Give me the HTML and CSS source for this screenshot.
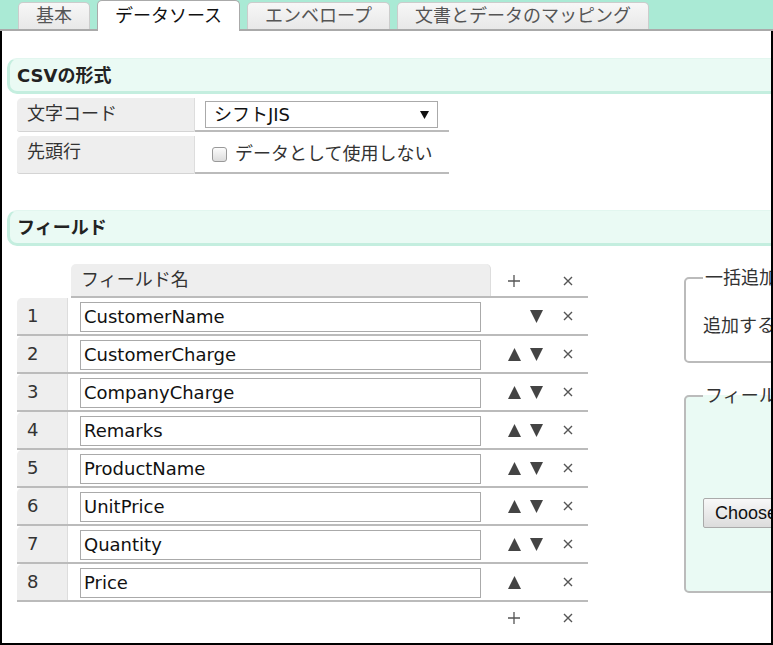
FILE: index.html
```html
<!DOCTYPE html>
<html lang="ja">
<head>
    <meta charset="UTF-8">
    <title>データソース</title>
    <link rel="stylesheet" href="styles.css">
</head>
<body>
    <!-- タブ -->
    <div class="tabs">
        <div class="tab">基本</div>
        <div class="tab tab-active">データソース</div>
        <div class="tab">エンベロープ</div>
        <div class="tab">文書とデータのマッピング</div>
    </div>

    <div class="frame">
        <!-- CSVの形式 -->
        <div class="section-title">CSVの形式</div>
        <div class="form">
            <div class="form-row">
                <div class="form-label">文字コード</div>
                <div class="form-value">
                    <div class="select">
                        <span>シフトJIS</span>
                        <svg width="9" height="8" viewBox="0 0 9 8"><polygon points="0,0 9,0 4.5,8" fill="#111"/></svg>
                    </div>
                </div>
            </div>
            <div class="form-row form-row-2">
                <div class="form-label">先頭行</div>
                <div class="form-value">
                    <span class="checkbox"></span>
                    <span>データとして使用しない</span>
                </div>
            </div>
        </div>

        <!-- フィールド -->
        <div class="section-title section-fields">フィールド</div>
        <div class="fields-wrap">
            <div class="field-table">
                <div class="field-row field-head">
                    <div class="cell-empty"></div>
                    <div class="cell-head">フィールド名</div>
                    <div class="cell-move"><svg class="icon-plus" width="12" height="12" viewBox="0 0 12 12"><path d="M6 0V12M0 6H12" stroke="#555" stroke-width="1.3"/></svg></div>
                    <div class="cell-del"><svg width="10" height="10" viewBox="0 0 10 10"><path d="M1 1L9 9M9 1L1 9" stroke="#555" stroke-width="1.4"/></svg></div>
                </div>

                <div class="field-row">
                    <div class="cell-num">1</div>
                    <div class="cell-name"><div class="input">CustomerName</div></div>
                    <div class="cell-move"><span class="tri"></span><svg class="tri" width="13" height="13" viewBox="0 0 13 13"><polygon points="0,0 13,0 6.5,13" fill="#444"/></svg></div>
                    <div class="cell-del"><svg width="10" height="10" viewBox="0 0 10 10"><path d="M1 1L9 9M9 1L1 9" stroke="#555" stroke-width="1.4"/></svg></div>
                </div>
                <div class="field-row">
                    <div class="cell-num">2</div>
                    <div class="cell-name"><div class="input">CustomerCharge</div></div>
                    <div class="cell-move"><svg class="tri" width="13" height="13" viewBox="0 0 13 13"><polygon points="6.5,0 13,13 0,13" fill="#444"/></svg><svg class="tri" width="13" height="13" viewBox="0 0 13 13"><polygon points="0,0 13,0 6.5,13" fill="#444"/></svg></div>
                    <div class="cell-del"><svg width="10" height="10" viewBox="0 0 10 10"><path d="M1 1L9 9M9 1L1 9" stroke="#555" stroke-width="1.4"/></svg></div>
                </div>
                <div class="field-row">
                    <div class="cell-num">3</div>
                    <div class="cell-name"><div class="input">CompanyCharge</div></div>
                    <div class="cell-move"><svg class="tri" width="13" height="13" viewBox="0 0 13 13"><polygon points="6.5,0 13,13 0,13" fill="#444"/></svg><svg class="tri" width="13" height="13" viewBox="0 0 13 13"><polygon points="0,0 13,0 6.5,13" fill="#444"/></svg></div>
                    <div class="cell-del"><svg width="10" height="10" viewBox="0 0 10 10"><path d="M1 1L9 9M9 1L1 9" stroke="#555" stroke-width="1.4"/></svg></div>
                </div>
                <div class="field-row">
                    <div class="cell-num">4</div>
                    <div class="cell-name"><div class="input">Remarks</div></div>
                    <div class="cell-move"><svg class="tri" width="13" height="13" viewBox="0 0 13 13"><polygon points="6.5,0 13,13 0,13" fill="#444"/></svg><svg class="tri" width="13" height="13" viewBox="0 0 13 13"><polygon points="0,0 13,0 6.5,13" fill="#444"/></svg></div>
                    <div class="cell-del"><svg width="10" height="10" viewBox="0 0 10 10"><path d="M1 1L9 9M9 1L1 9" stroke="#555" stroke-width="1.4"/></svg></div>
                </div>
                <div class="field-row">
                    <div class="cell-num">5</div>
                    <div class="cell-name"><div class="input">ProductName</div></div>
                    <div class="cell-move"><svg class="tri" width="13" height="13" viewBox="0 0 13 13"><polygon points="6.5,0 13,13 0,13" fill="#444"/></svg><svg class="tri" width="13" height="13" viewBox="0 0 13 13"><polygon points="0,0 13,0 6.5,13" fill="#444"/></svg></div>
                    <div class="cell-del"><svg width="10" height="10" viewBox="0 0 10 10"><path d="M1 1L9 9M9 1L1 9" stroke="#555" stroke-width="1.4"/></svg></div>
                </div>
                <div class="field-row">
                    <div class="cell-num">6</div>
                    <div class="cell-name"><div class="input">UnitPrice</div></div>
                    <div class="cell-move"><svg class="tri" width="13" height="13" viewBox="0 0 13 13"><polygon points="6.5,0 13,13 0,13" fill="#444"/></svg><svg class="tri" width="13" height="13" viewBox="0 0 13 13"><polygon points="0,0 13,0 6.5,13" fill="#444"/></svg></div>
                    <div class="cell-del"><svg width="10" height="10" viewBox="0 0 10 10"><path d="M1 1L9 9M9 1L1 9" stroke="#555" stroke-width="1.4"/></svg></div>
                </div>
                <div class="field-row">
                    <div class="cell-num">7</div>
                    <div class="cell-name"><div class="input">Quantity</div></div>
                    <div class="cell-move"><svg class="tri" width="13" height="13" viewBox="0 0 13 13"><polygon points="6.5,0 13,13 0,13" fill="#444"/></svg><svg class="tri" width="13" height="13" viewBox="0 0 13 13"><polygon points="0,0 13,0 6.5,13" fill="#444"/></svg></div>
                    <div class="cell-del"><svg width="10" height="10" viewBox="0 0 10 10"><path d="M1 1L9 9M9 1L1 9" stroke="#555" stroke-width="1.4"/></svg></div>
                </div>
                <div class="field-row">
                    <div class="cell-num">8</div>
                    <div class="cell-name"><div class="input">Price</div></div>
                    <div class="cell-move"><svg class="tri" width="13" height="13" viewBox="0 0 13 13"><polygon points="6.5,0 13,13 0,13" fill="#444"/></svg></div>
                    <div class="cell-del"><svg width="10" height="10" viewBox="0 0 10 10"><path d="M1 1L9 9M9 1L1 9" stroke="#555" stroke-width="1.4"/></svg></div>
                </div>

                <div class="field-row field-foot">
                    <div class="cell-empty"></div>
                    <div class="cell-empty"></div>
                    <div class="cell-move"><svg class="icon-plus" width="12" height="12" viewBox="0 0 12 12"><path d="M6 0V12M0 6H12" stroke="#555" stroke-width="1.3"/></svg></div>
                    <div class="cell-del"><svg width="10" height="10" viewBox="0 0 10 10"><path d="M1 1L9 9M9 1L1 9" stroke="#555" stroke-width="1.4"/></svg></div>
                </div>
            </div>

            <div class="side">
                <fieldset class="panel panel-bulk">
                    <legend>一括追加</legend>
                    <div>追加するフィールド名</div>
                </fieldset>
                <fieldset class="panel panel-file">
                    <legend>フィールド名の読み込み</legend>
                    <button class="choose">Choose File</button>
                </fieldset>
            </div>
        </div>
    </div>
</body>
</html>
```

FILE: styles.css
```css
* {
    margin: 0;
    padding: 0;
    box-sizing: border-box;
}

body {
    font-family: "DejaVu Sans", "Noto Sans CJK JP", sans-serif;
    font-size: 18px;
    line-height: 24px;
    color: #222;
    background-color: #fff;
    width: 773px;
    height: 645px;
    overflow: hidden;
}

/* タブ */
.tabs {
    height: 31px;
    background-color: #aaead5;
    border-bottom: 2px solid #aaa;
    display: flex;
    align-items: flex-end;
    gap: 7px;
    padding-left: 18px;
}

.tab {
    height: 27px;
    line-height: 26px;
    padding: 0 17px;
    color: #555;
    background: linear-gradient(#f7f7f7, #e8e8e8);
    border: 1px solid #ccc;
    border-bottom: 0;
    border-radius: 5px 5px 0 0;
    white-space: nowrap;
}

.tab-active {
    height: 31px;
    margin-bottom: -2px;
    line-height: 29px;
    color: #111;
    background: #fff;
    border-color: #aaa;
    padding-bottom: 2px;
}

/* 外枠 */
.frame {
    height: 614px;
    border: 2px solid #000;
    border-top: 0;
    overflow: hidden;
}

.section-title {
    margin: 27px 0 0 5px;
    height: 36px;
    line-height: 33px;
    padding-left: 7px;
    font-weight: bold;
    color: #222;
    background-color: #eafaf4;
    border-left: 3px solid #c4eedf;
    border-bottom: 3px solid #c4eedf;
    border-top: 1px solid #e2f6ef;
    border-radius: 10px 0 0 10px;
}

.section-fields {
    margin-top: 36px;
}

/* CSVの形式 */
.form {
    margin: 4px 0 0 15px;
    display: flex;
    flex-direction: column;
    gap: 4px;
}

.form-row {
    display: flex;
    height: 34px;
}

.form-row-2 {
    height: 38px;
}

.form-label {
    width: 178px;
    padding-left: 10px;
    line-height: 32px;
    color: #333;
    background-color: #eee;
    border-right: 1px solid #ddd;
    border-bottom: 1px solid #d4d4d4;
    border-radius: 5px 0 0 3px;
}

.form-value {
    width: 254px;
    border-bottom: 2px solid #bbb;
    display: flex;
    align-items: center;
    padding-left: 10px;
}

.select {
    width: 233px;
    height: 27px;
    border: 1px solid #aaa;
    display: flex;
    align-items: center;
    justify-content: space-between;
    padding: 0 8px 0 8px;
    color: #111;
    margin-top: 1px;
}

.checkbox {
    width: 15px;
    height: 15px;
    margin: 0 8px 0 7px;
    border: 1px solid #999;
    border-radius: 3px;
    background: linear-gradient(#fcfcfc, #dcdcdc);
}

.form-row-2 .form-value span:last-child {
    color: #333;
}

/* フィールド */
.fields-wrap {
    display: flex;
    margin: 18px 0 0 15px;
}

.field-table {
    width: 571px;
    flex-shrink: 0;
}

.field-row {
    display: grid;
    grid-template-columns: 51px 423px 57px 40px;
    height: 38px;
    border-bottom: 2px solid #bbb;
    align-items: center;
}

.field-head {
    height: 34px;
    border-bottom: 0;
    position: relative;
}

.field-head::after {
    content: "";
    position: absolute;
    left: 54px;
    right: 0;
    bottom: 0;
    border-bottom: 2px solid #bbb;
}

.field-foot {
    height: 32px;
    border-bottom: 0;
}

.cell-head {
    height: 100%;
    margin-left: 3px;
    padding-left: 10px;
    line-height: 32px;
    color: #333;
    background-color: #eee;
    border-right: 1px solid #ddd;
    border-radius: 5px 5px 0 0;
}

.cell-num {
    height: 100%;
    padding-left: 10px;
    line-height: 36px;
    color: #333;
    background-color: #eee;
    border-right: 1px solid #ddd;
    border-radius: 5px 0 0 0;
}

.cell-name {
    padding-left: 12px;
}

.input {
    width: 401px;
    height: 30px;
    margin-top: 1px;
    line-height: 28px;
    padding-left: 3px;
    color: #111;
    border: 1px solid #aaa;
}

.cell-move {
    display: flex;
    align-items: center;
    gap: 9px;
    padding-left: 17px;
}

.tri {
    display: block;
    width: 13px;
    height: 13px;
}

.icon-plus {
    display: block;
}

.cell-del {
    display: flex;
    justify-content: center;
    padding-right: 1px;
}

/* 右側のパネル */
.side {
    margin: 4px 0 0 96px;
    flex-shrink: 0;
    width: 320px;
}

.panel {
    border: 2px solid #bbb;
    border-radius: 5px;
    padding: 26px 17px 23px;
    color: #333;
}

.panel legend {
    padding: 0 4px 0 2px;
    line-height: 20px;
    margin-left: 0;
}

.panel-file {
    margin-top: 23px;
    height: 207px;
    padding-top: 92px;
    background-color: #eafaf4;
}

.choose {
    font-family: "Liberation Sans", Arial, sans-serif;
    font-size: 18px;
    height: 30px;
    padding: 0 11px;
    color: #111;
    background: linear-gradient(#f8f8f8, #dcdcdc);
    border: 1px solid #aaa;
    border-radius: 2px;
}
```
